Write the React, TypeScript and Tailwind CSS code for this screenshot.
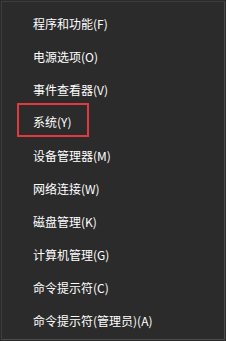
const items = [
  "程序和功能(F)",
  "电源选项(O)",
  "事件查看器(V)",
  "系统(Y)",
  "设备管理器(M)",
  "网络连接(W)",
  "磁盘管理(K)",
  "计算机管理(G)",
  "命令提示符(C)",
  "命令提示符(管理员)(A)",
];

export default function App() {
  return (
    <div
      className="w-[226px] h-[341px] bg-[#2b2b2b] p-px"
      style={{ fontFamily: '"Microsoft YaHei", "Noto Sans CJK SC", sans-serif' }}
    >
      <div className="h-full border border-[#3d3d3d] border-r-[#4a4a4a] border-b-[#4a4a4a]">
        <ul className="pt-[5px]">
          {items.map((label, i) => {
            const selected = i === 3;
            return (
              <li key={label} className="h-[33px] flex pl-[15px]">
                <span
                  className={`flex items-center pl-[14px] border-2 text-[12px] text-white whitespace-nowrap ${
                    selected
                      ? "w-[72px] h-[34px] -mt-[3px] pt-[4px] border-[#e0393e]"
                      : "h-full border-transparent"
                  }`}
                >
                  {label}
                </span>
              </li>
            );
          })}
        </ul>
      </div>
    </div>
  );
}
